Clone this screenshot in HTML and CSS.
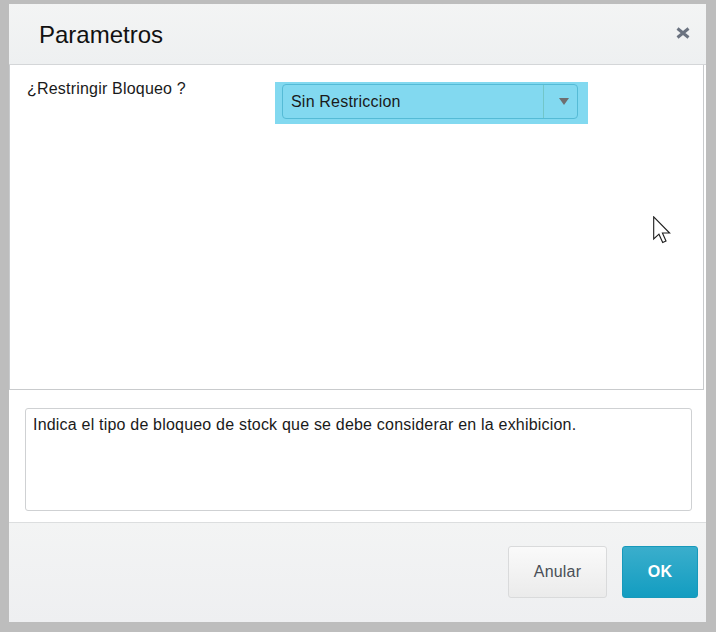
FILE: index.html
```html
<!doctype html>
<html lang="es">
<head>
    <meta charset="UTF-8">
    <title>Parametros</title>
    <link rel="stylesheet" href="styles.css">
</head>
<body>
<div class="dialog">
    <div class="dialog-header">
        <h1 class="dialog-title">Parametros</h1>
        <button class="close" type="button" aria-label="Cerrar">
            <svg width="14" height="12" viewBox="0 0 14 12">
                <path d="M1.5 1.5 L12.5 10.5 M12.5 1.5 L1.5 10.5" stroke="#6b7380" stroke-width="3" fill="none"/>
            </svg>
        </button>
    </div>

    <div class="dialog-body">
        <div class="field-row">
            <label class="field-label">¿Restringir Bloqueo ?</label>
            <div class="field-focus">
                <div class="select">
                    <span class="select-value">Sin Restriccion</span>
                    <span class="select-arrow"></span>
                </div>
            </div>
        </div>
        <svg class="pointer" width="18" height="28" viewBox="0 0 13 20">
            <path d="M0.5 0.5 V16.5 L4.3 13 L7 19 L9.4 18 L6.8 12.2 H12 Z" fill="#fff" stroke="#1e1e1e" stroke-width="0.8" stroke-linejoin="miter"/>
        </svg>
    </div>

    <div class="dialog-help">
        <div class="help-box">Indica el tipo de bloqueo de stock que se debe considerar en la exhibicion.</div>
    </div>

    <div class="dialog-footer">
        <button class="btn btn-default" type="button">Anular</button>
        <button class="btn btn-primary" type="button">OK</button>
    </div>
</div>
</body>
</html>
```

FILE: styles.css
```css
* {
    margin: 0;
    padding: 0;
    box-sizing: border-box;
}

body {
    font-family: "Liberation Sans", Arial, sans-serif;
    font-size: 16px;
    letter-spacing: 0.2px;
    color: #1a1a1a;
    background: #bdbdbd;
    padding: 4px 10px 10px 9px;
    width: 716px;
    height: 632px;
    overflow: hidden;
}

.dialog {
    width: 697px;
    height: 618px;
    background: #fff;
    display: flex;
    flex-direction: column;
}

/* header */
.dialog-header {
    height: 61px;
    display: flex;
    align-items: center;
    justify-content: space-between;
    padding: 0 16px 0 30px;
    background: linear-gradient(#f3f4f4, #eef0f1);
    border-bottom: 1px solid #d4d6d8;
}

.dialog-title {
    font-size: 24px;
    font-weight: normal;
    letter-spacing: 0;
    color: #111;
    margin-top: 1px;
}

.close {
    border: none;
    background: none;
    width: 14px;
    height: 12px;
    display: flex;
    margin-top: -3px;
}

/* parameter panel */
.dialog-body {
    position: relative;
    height: 325px;
    margin-right: 2px;
    border: 1px solid #c9cbcd;
    border-top: none;
    padding: 15px 16px 15px 17px;
}

.field-row {
    display: flex;
    align-items: flex-start;
}

.field-label {
    width: 248px;
    line-height: 18px;
}

.field-focus {
    margin-top: 2px;
    width: 313px;
    height: 42px;
    background: #82d9f0;
    padding: 2px 10px 5px 7px;
}

.select {
    height: 35px;
    border: 1px solid #55bbd6;
    border-radius: 4px;
    display: flex;
    align-items: center;
}

.select-value {
    flex: 1;
    padding-left: 8px;
}

.select-arrow {
    width: 34px;
    height: 100%;
    border-left: 1px solid #72c6c9;
    position: relative;
}

.select-arrow::after {
    content: '';
    position: absolute;
    left: 15px;
    top: 13px;
    border-left: 5px solid transparent;
    border-right: 5px solid transparent;
    border-top: 7px solid #6e6e70;
}

.pointer {
    position: absolute;
    left: 643px;
    top: 151px;
}

/* help text */
.dialog-help {
    padding: 18px 14px 11px 16px;
}

.help-box {
    height: 103px;
    border: 1px solid #cfd1d3;
    border-radius: 3px;
    padding: 6px 7px;
    line-height: 20px;
}

/* footer */
.dialog-footer {
    flex: 1;
    display: flex;
    justify-content: flex-end;
    align-items: flex-start;
    gap: 15px;
    padding: 23px 8px 0 0;
    background: linear-gradient(#f3f4f4, #eeeff1);
    border-top: 1px solid #dcdedf;
}

.btn {
    height: 52px;
    border-radius: 3px;
    font-family: inherit;
    font-size: 16px;
    letter-spacing: 0.2px;
}

.btn-default {
    width: 99px;
    color: #4a4f57;
    background: linear-gradient(#fafafa, #ebebeb);
    border: 1px solid #d9dadb;
}

.btn-primary {
    width: 76px;
    color: #fff;
    font-weight: bold;
    background: linear-gradient(#3aaecc, #139dc1);
    border: 1px solid #1799bb;
}
```
